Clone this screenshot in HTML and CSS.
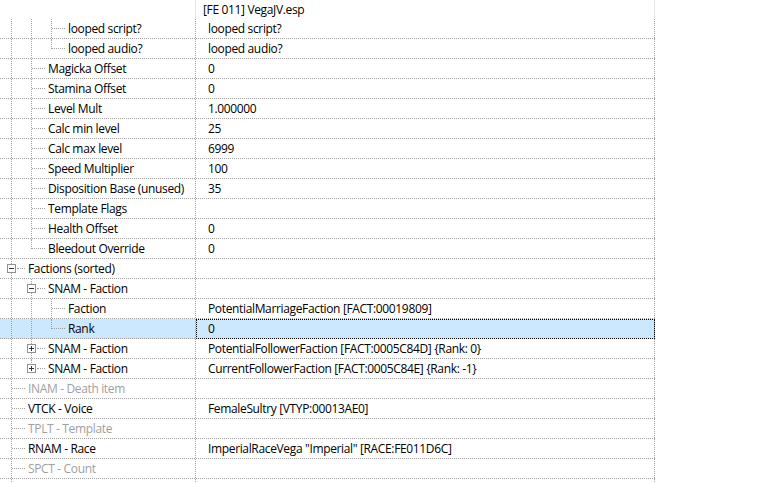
FILE: index.html
```html
<!DOCTYPE html>
<html lang="en">
<head>
    <meta charset="UTF-8">
    <title>VegaJV.esp - record view</title>
    <link rel="stylesheet" href="styles.css">
</head>
<body>
    <div class="tree">
        <div class="row head">
            <div class="cell name"></div>
            <div class="cell value">[FE 011] VegaJV.esp</div>
        </div>

        <div class="row">
            <div class="cell name"><span class="g pipe"></span><span class="g pipe"></span><span class="g tee"></span><span class="label">looped script?</span></div>
            <div class="cell value">looped script?</div>
        </div>
        <div class="row">
            <div class="cell name"><span class="g pipe"></span><span class="g pipe"></span><span class="g elbow"></span><span class="label">looped audio?</span></div>
            <div class="cell value">looped audio?</div>
        </div>
        <div class="row">
            <div class="cell name"><span class="g pipe"></span><span class="g tee"></span><span class="label">Magicka Offset</span></div>
            <div class="cell value">0</div>
        </div>
        <div class="row">
            <div class="cell name"><span class="g pipe"></span><span class="g tee"></span><span class="label">Stamina Offset</span></div>
            <div class="cell value">0</div>
        </div>
        <div class="row">
            <div class="cell name"><span class="g pipe"></span><span class="g tee"></span><span class="label">Level Mult</span></div>
            <div class="cell value">1.000000</div>
        </div>
        <div class="row">
            <div class="cell name"><span class="g pipe"></span><span class="g tee"></span><span class="label">Calc min level</span></div>
            <div class="cell value">25</div>
        </div>
        <div class="row">
            <div class="cell name"><span class="g pipe"></span><span class="g tee"></span><span class="label">Calc max level</span></div>
            <div class="cell value">6999</div>
        </div>
        <div class="row">
            <div class="cell name"><span class="g pipe"></span><span class="g tee"></span><span class="label">Speed Multiplier</span></div>
            <div class="cell value">100</div>
        </div>
        <div class="row">
            <div class="cell name"><span class="g pipe"></span><span class="g tee"></span><span class="label">Disposition Base (unused)</span></div>
            <div class="cell value">35</div>
        </div>
        <div class="row">
            <div class="cell name"><span class="g pipe"></span><span class="g tee"></span><span class="label">Template Flags</span></div>
            <div class="cell value"></div>
        </div>
        <div class="row">
            <div class="cell name"><span class="g pipe"></span><span class="g tee"></span><span class="label">Health Offset</span></div>
            <div class="cell value">0</div>
        </div>
        <div class="row">
            <div class="cell name"><span class="g pipe"></span><span class="g elbow"></span><span class="label">Bleedout Override</span></div>
            <div class="cell value">0</div>
        </div>

        <div class="row">
            <div class="cell name"><span class="g node mid"><i class="btn minus"></i></span><span class="label">Factions (sorted)</span></div>
            <div class="cell value"></div>
        </div>
        <div class="row">
            <div class="cell name"><span class="g pipe"></span><span class="g node mid"><i class="btn minus"></i></span><span class="label">SNAM - Faction</span></div>
            <div class="cell value"></div>
        </div>
        <div class="row">
            <div class="cell name"><span class="g pipe"></span><span class="g pipe"></span><span class="g tee"></span><span class="label">Faction</span></div>
            <div class="cell value">PotentialMarriageFaction [FACT:00019809]</div>
        </div>
        <div class="row sel">
            <div class="cell name"><span class="g pipe"></span><span class="g pipe"></span><span class="g elbow"></span><span class="label">Rank</span></div>
            <div class="cell value focus">0</div>
        </div>
        <div class="row">
            <div class="cell name"><span class="g pipe"></span><span class="g node mid"><i class="btn plus"></i></span><span class="label">SNAM - Faction</span></div>
            <div class="cell value">PotentialFollowerFaction [FACT:0005C84D] {Rank: 0}</div>
        </div>
        <div class="row">
            <div class="cell name"><span class="g pipe"></span><span class="g node last"><i class="btn plus"></i></span><span class="label">SNAM - Faction</span></div>
            <div class="cell value">CurrentFollowerFaction [FACT:0005C84E] {Rank: -1}</div>
        </div>

        <div class="row">
            <div class="cell name"><span class="g tee"></span><span class="label off">INAM - Death item</span></div>
            <div class="cell value"></div>
        </div>
        <div class="row">
            <div class="cell name"><span class="g tee"></span><span class="label">VTCK - Voice</span></div>
            <div class="cell value">FemaleSultry [VTYP:00013AE0]</div>
        </div>
        <div class="row">
            <div class="cell name"><span class="g tee"></span><span class="label off">TPLT - Template</span></div>
            <div class="cell value"></div>
        </div>
        <div class="row">
            <div class="cell name"><span class="g tee"></span><span class="label">RNAM - Race</span></div>
            <div class="cell value">ImperialRaceVega "Imperial" [RACE:FE011D6C]</div>
        </div>
        <div class="row">
            <div class="cell name"><span class="g tee"></span><span class="label off">SPCT - Count</span></div>
            <div class="cell value"></div>
        </div>
        <div class="row">
            <div class="cell name"><span class="g pipe"></span></div>
            <div class="cell value"></div>
        </div>
    </div>
</body>
</html>
```

FILE: styles.css
```css
html, body {
    margin: 0;
    padding: 0;
    background: #fff;
    overflow: hidden;
}
body {
    font-family: "Open Sans", "Noto Sans", sans-serif;
    font-size: 12px;
    letter-spacing: -0.35px;
    color: #000;
}
.tree {
    width: 655px;
}
.row {
    display: flex;
    height: 19px;
    line-height: 19px;
    border-bottom: 1px dotted #a0a0a0;
}
.row.head {
    border-bottom: none;
}
.row.sel {
    background: #cce8ff;
}
.cell {
    flex: none;
    height: 19px;
    white-space: nowrap;
    overflow: hidden;
}
.name {
    width: 194px;
    padding-left: 1px;
    display: flex;
    border-right: 1px dotted #a0a0a0;
}
.value {
    width: 446px;
    padding-left: 12px;
    border-right: 1px dotted #a0a0a0;
}
.head .name,
.head .value {
    border-right: 1px solid #e5e5e5;
}
.head .value {
    width: 451px;
    padding-left: 7px;
}
.value.focus {
    position: relative;
    overflow: visible;
}
.value.focus::after {
    content: "";
    position: absolute;
    top: 0;
    left: 0;
    right: -1px;
    bottom: -1px;
    border: 1px dotted #000;
}

/* tree guide lines */
.g {
    flex: none;
    width: 20px;
    height: 19px;
    position: relative;
}
.g::before,
.g::after {
    content: "";
    position: absolute;
}
.pipe::before,
.tee::before,
.node.mid::before {
    left: 10px;
    top: 0;
    height: 19px;
    border-left: 1px dotted #a0a0a0;
}
.elbow::before,
.node.last::before {
    left: 10px;
    top: 0;
    height: 10px;
    border-left: 1px dotted #a0a0a0;
}
.tee::after,
.elbow::after {
    left: 11px;
    top: 9px;
    width: 13px;
    border-top: 1px dotted #a0a0a0;
}
.node::after {
    left: 16px;
    top: 9px;
    width: 8px;
    border-top: 1px dotted #a0a0a0;
}
.btn {
    position: absolute;
    left: 6px;
    top: 5px;
    width: 7px;
    height: 7px;
    border: 1px solid #919191;
    background: #fff;
}
.btn::before,
.btn::after {
    content: "";
    position: absolute;
    background: #333;
}
.btn::before {
    left: 1px;
    top: 3px;
    width: 5px;
    height: 1px;
}
.btn.plus::after {
    left: 3px;
    top: 1px;
    width: 1px;
    height: 5px;
}
.label {
    padding-left: 7px;
}
.label.off {
    color: #a0a0a0;
}
```
